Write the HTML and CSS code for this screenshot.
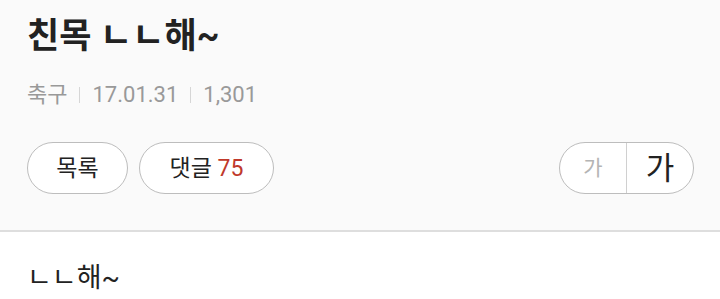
FILE: index.html
```html
<!DOCTYPE html>
<html lang="ko">
<head>
    <meta charset="UTF-8">
    <meta name="viewport" content="width=device-width, initial-scale=1.0">
    <title>친목 ㄴㄴ해~</title>
    <link rel="stylesheet" href="styles.css">
</head>
<body>
    <div class="post-head">
        <h1 class="post-title">친목 ㄴㄴ해~</h1>
        <div class="post-meta">
            <span>축구</span>
            <span class="sep"></span>
            <span>17.01.31</span>
            <span class="sep"></span>
            <span>1,301</span>
        </div>
        <div class="post-actions">
            <div class="btn-group">
                <button class="pill btn-list">목록</button>
                <button class="pill btn-comment">댓글 <span class="count">75</span></button>
            </div>
            <div class="size-toggle">
                <button class="size-small">가</button>
                <button class="size-large">가</button>
            </div>
        </div>
    </div>
    <div class="post-body">
        <p>ㄴㄴ해~</p>
    </div>
</body>
</html>
```
FILE: styles.css
```css
html, body { margin: 0; padding: 0; background: #fff; font-family: Roboto, "Noto Sans CJK KR", sans-serif; color: #222; }
button { font-family: inherit; cursor: pointer; }

.post-head { background: #fafafa; padding: 16px 26px 36px 27px; border-bottom: 2px solid #dedede; }
.post-title { margin: 0; font-size: 35px; font-weight: bold; line-height: 42px; color: #222; }
.post-meta { display: flex; align-items: center; margin-top: 23px; font-size: 22px; line-height: 28px; color: #999; }
.post-meta .sep { width: 1px; height: 16px; background: #d6d6d6; margin: 0 12px; }

.post-actions { display: flex; justify-content: space-between; align-items: center; margin-top: 33px; }
.btn-group { display: flex; gap: 11px; }
.pill {
    height: 52px; border: 1.5px solid #bdbdbd; border-radius: 26px; background: #fff;
    font-size: 23px; color: #222; padding: 0; line-height: 1;
}
.btn-list { width: 101px; }
.btn-comment { width: 135px; }
.count { color: #c0392b; }

.size-toggle { display: flex; width: 135px; height: 52px; border: 1.5px solid #bdbdbd; border-radius: 26px; background: #fff; box-sizing: border-box; overflow: hidden; }
.size-toggle button { flex: 1; border: 0; background: transparent; padding: 0; line-height: 1; }
.size-small { font-size: 21px; color: #b4b4b4; border-right: 1.5px solid #d0d0d0 !important; }
.size-large { font-size: 31px; color: #222; }

.post-body { padding: 29px 27px; }
.post-body p { margin: 0; font-size: 27px; line-height: 34px; color: #222; }
```
